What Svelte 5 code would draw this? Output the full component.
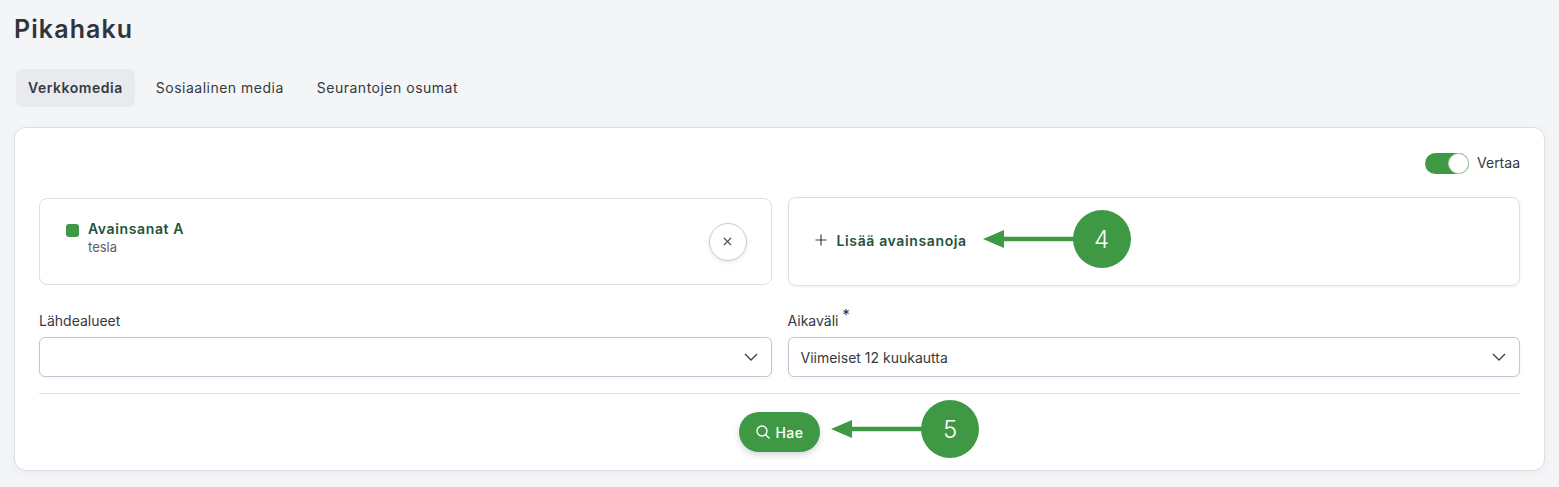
<script lang="ts">
  const tabs = ["Verkkomedia", "Sosiaalinen media", "Seurantojen osumat"];
</script>

<main>
  <h1>Pikahaku</h1>
  <nav class="tabs">
    {#each tabs as tab, i}
      <span class="tab" class:active={i === 0}>{tab}</span>
    {/each}
  </nav>

  <section class="card">
    <div class="compare">
      <span class="switch"><span class="knob"></span></span>
      <span class="compare-label">Vertaa</span>
    </div>

    <div class="grid keywords">
      <div class="kw">
        <span class="dot"></span>
        <div class="kw-text">
          <strong>Avainsanat A</strong>
          <span>tesla</span>
        </div>
        <button class="close" aria-label="Poista">
          <svg width="9" height="9" viewBox="0 0 10 10"><path d="M1 1l8 8M9 1l-8 8" stroke="#3a3f47" stroke-width="1.3" fill="none" /></svg>
        </button>
      </div>
      <div class="kw add">
        <svg width="12" height="12" viewBox="0 0 12 12"><path d="M6 .5v11M.5 6h11" stroke="#3a3f47" stroke-width="1.2" fill="none" /></svg>
        <strong>Lisää avainsanoja</strong>
        <div class="callout four">
          <svg width="92" height="20" viewBox="0 0 92 20"><path d="M0 10L21 1v6.8h71v4.4H21V19z" fill="#3f9944" /></svg>
          <span class="bubble">4</span>
        </div>
      </div>
    </div>

    <div class="grid fields">
      <div class="field">
        <label for="areas">Lähdealueet</label>
        <div class="select" id="areas">
          <span></span>
          <svg width="14" height="8" viewBox="0 0 14 8"><path d="M1 1l6 6 6-6" stroke="#3a3f47" stroke-width="1.3" fill="none" /></svg>
        </div>
      </div>
      <div class="field">
        <label for="range">Aikaväli <sup>*</sup></label>
        <div class="select" id="range">
          <span>Viimeiset 12 kuukautta</span>
          <svg width="14" height="8" viewBox="0 0 14 8"><path d="M1 1l6 6 6-6" stroke="#3a3f47" stroke-width="1.3" fill="none" /></svg>
        </div>
      </div>
    </div>

    <div class="actions">
      <div class="search-wrap">
        <button class="search">
          <svg width="16" height="16" viewBox="0 0 16 16"><circle cx="7" cy="7" r="5" stroke="#fff" stroke-width="1.3" fill="none" /><path d="M10.7 10.7L14.5 14.5" stroke="#fff" stroke-width="1.3" /></svg>
          Hae
        </button>
        <div class="callout five">
          <svg width="92" height="20" viewBox="0 0 92 20"><path d="M0 10L21 1v6.8h71v4.4H21V19z" fill="#3f9944" /></svg>
          <span class="bubble">5</span>
        </div>
      </div>
    </div>
  </section>
</main>

<style>
  :global(body) {
    background: #f4f5f7;
    font-family: Inter, "Liberation Sans", sans-serif;
    color: #343a42;
  }

  main {
    height: 487px;
    padding: 0 14px;
    box-sizing: border-box;
    overflow: hidden;
  }

  h1 {
    margin: 0;
    padding-top: 12px;
    font-size: 25px;
    line-height: 34px;
    font-weight: 600;
    letter-spacing: 1.1px;
    color: #30343b;
  }

  .tabs {
    display: flex;
    gap: 9px;
    margin: 23px 0 20px 2px;
  }

  .tab {
    padding: 0 12px;
    height: 38px;
    line-height: 38px;
    font-size: 14px;
    border-radius: 6px;
    letter-spacing: 0.5px;
  }

  .tab.active {
    background: #e8eaef;
    font-weight: 600;
    letter-spacing: 0.53px;
  }

  .card {
    height: 344px;
    box-sizing: border-box;
    padding: 25px 24px 0 24px;
    background: #fff;
    border: 1px solid #dcdfe4;
    border-radius: 12px;
    box-shadow: 0 2px 8px rgba(40, 50, 70, 0.05);
  }

  .compare {
    display: flex;
    justify-content: flex-end;
    align-items: center;
    gap: 8px;
    height: 21px;
    font-size: 14px;
    margin-bottom: 24px;
  }

  .compare-label {
    margin-top: -2px;
  }

  .switch {
    display: block;
    position: relative;
    width: 44px;
    height: 21px;
    border-radius: 11px;
    background: #3f9944;
  }

  .knob {
    position: absolute;
    right: 0;
    top: 0;
    width: 19px;
    height: 19px;
    border: 1px solid #a9cfab;
    border-radius: 50%;
    background: #fff;
  }

  .grid {
    display: grid;
    grid-template-columns: 1fr 1fr;
    gap: 16px;
  }

  .kw {
    position: relative;
    display: flex;
    align-items: center;
    height: 87px;
    box-sizing: border-box;
    padding: 0 24px 0 26px;
    border: 1px solid #dcdfe4;
    border-radius: 8px;
  }

  .add {
    gap: 10px;
    height: 89px;
    margin: -1px 0;
    padding-bottom: 3px;
    box-shadow: 0 1px 3px rgba(40, 50, 70, 0.08);
  }

  .kw strong {
    font-size: 14px;
    font-weight: 600;
    letter-spacing: 0.63px;
    color: #22543d;
  }

  .dot {
    width: 13px;
    height: 13px;
    margin: 25px 9px 0 0;
    align-self: flex-start;
    border-radius: 3px;
    background: #3f9944;
  }

  .kw-text {
    display: flex;
    flex-direction: column;
    flex: 1;
    gap: 2px;
    font-size: 13px;
    color: #5c626b;
    margin-top: -8px;
  }

  .close {
    display: flex;
    align-items: center;
    justify-content: center;
    width: 38px;
    height: 38px;
    padding: 0;
    border: 1px solid #c4c9d4;
    border-radius: 50%;
    background: #fff;
    box-shadow: 0 2px 4px rgba(40, 50, 70, 0.08);
  }

  .callout {
    position: absolute;
    display: flex;
    align-items: center;
  }

  .callout svg {
    margin-right: -2px;
  }

  .bubble {
    display: flex;
    align-items: center;
    justify-content: center;
    width: 58px;
    height: 58px;
    border-radius: 50%;
    background: #3f9944;
    color: #fff;
    font-size: 24px;
    font-weight: 300;
  }

  .four {
    left: 194px;
    top: 12px;
  }

  .fields {
    margin-top: 25px;
  }

  .field {
    display: flex;
    flex-direction: column;
  }

  label {
    height: 27px;
    line-height: 22px;
    font-size: 14px;
  }

  sup {
    font-size: 15px;
    line-height: 0;
    color: #30343b;
  }

  .select {
    display: flex;
    align-items: center;
    justify-content: space-between;
    height: 40px;
    box-sizing: border-box;
    padding: 0 13px 0 12px;
    border: 1px solid #c0c6d4;
    border-radius: 6px;
    font-size: 14px;
    box-shadow: 0 1px 3px rgba(40, 50, 70, 0.06);
  }

  .actions {
    margin-top: 16px;
    padding-top: 18px;
    border-top: 1px solid #dfe1e5;
    display: flex;
    justify-content: center;
  }

  .search-wrap {
    position: relative;
  }

  .search {
    display: flex;
    align-items: center;
    justify-content: center;
    gap: 4px;
    width: 81px;
    height: 40px;
    padding: 0;
    border: 0;
    border-radius: 20px;
    background: #3f9944;
    color: #fff;
    font-family: Inter, sans-serif;
    font-size: 14px;
    font-weight: 500;
    letter-spacing: 0.5px;
    box-shadow: 0 3px 6px rgba(40, 50, 70, 0.2);
  }

  .five {
    left: 92px;
    top: -12px;
  }
</style>
